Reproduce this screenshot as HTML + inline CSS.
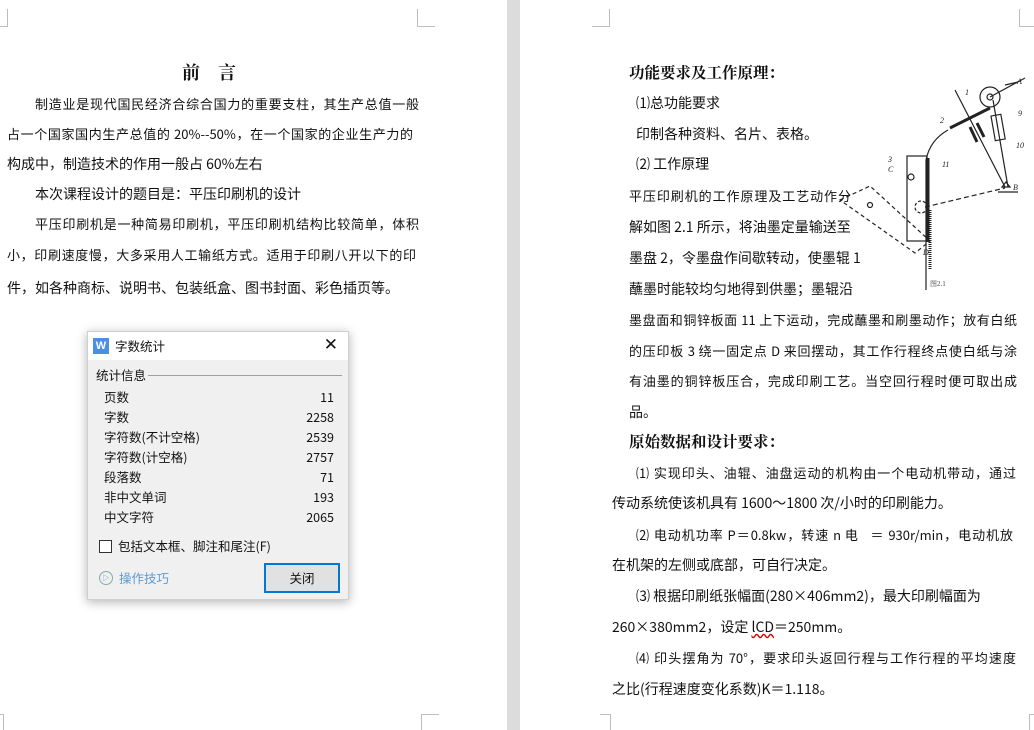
<!DOCTYPE html>
<html><head><meta charset="utf-8">
<style>
*{margin:0;padding:0;box-sizing:border-box}
body{width:1034px;height:730px;overflow:hidden;background:#fff;position:relative;font-family:"Liberation Serif","Noto Serif CJK SC","Noto Sans CJK SC",serif;color:#111}
.gap{position:absolute;left:507px;top:0;width:13px;height:730px;background:#dcdcdc}
.m{position:absolute;background:#bdbdbd}
.l{position:absolute;white-space:nowrap;font-size:14px;line-height:18px;font-family:"Noto Sans CJK SC","WenQuanYi Zen Hei",sans-serif}
.j{text-align:justify;text-align-last:justify;white-space:normal;font-size:13px;height:18px;overflow:visible}
.h{font-family:"Noto Serif CJK SC",serif;font-weight:bold;font-size:15.5px}
.dlg{position:absolute;left:87px;top:331px;width:262px;height:269px;background:#f0f0f0;border:1px solid #cfcfcf;box-shadow:0 2px 10px rgba(0,0,0,.3);font-family:"Noto Sans CJK SC","Liberation Sans",sans-serif;font-size:12.5px;color:#111}
.dlg .tb{height:28px;background:#fff;position:relative}
.row{position:absolute;left:16px;width:230px;height:18px;line-height:18px}
.row span{position:absolute;right:0}
</style></head><body>
<div class="gap"></div>
<div class="m" style="left:7px;top:9px;width:1px;height:18px"></div><div class="m" style="left:0;top:26px;width:8px;height:1px"></div>
<div class="m" style="left:417px;top:9px;width:1px;height:18px"></div><div class="m" style="left:417px;top:26px;width:18px;height:1px"></div>
<div class="m" style="left:609px;top:9px;width:1px;height:18px"></div><div class="m" style="left:592px;top:26px;width:18px;height:1px"></div>
<div class="m" style="left:1019px;top:9px;width:1px;height:18px"></div><div class="m" style="left:1019px;top:26px;width:15px;height:1px"></div>
<div class="m" style="left:3px;top:714px;width:1px;height:16px"></div><div class="m" style="left:0;top:714px;width:4px;height:1px"></div>
<div class="m" style="left:421px;top:714px;width:1px;height:16px"></div><div class="m" style="left:421px;top:714px;width:18px;height:1px"></div>
<div class="m" style="left:610px;top:714px;width:1px;height:16px"></div><div class="m" style="left:600px;top:714px;width:11px;height:1px"></div>
<div class="m" style="left:1029px;top:714px;width:1px;height:16px"></div><div class="m" style="left:1029px;top:714px;width:5px;height:1px"></div>

<div class="l h" style="left:182px;top:61px;font-size:18px;line-height:22px">前&nbsp;&nbsp;&nbsp;&nbsp;言</div>
<div class="l j" style="left:35px;top:95px;width:384px">制造业是现代国民经济合综合国力的重要支柱，其生产总值一般</div>
<div class="l j" style="left:7px;top:125px;width:406px">占一个国家国内生产总值的 20%--50%，在一个国家的企业生产力的</div>
<div class="l" style="left:7px;top:155px">构成中，制造技术的作用一般占 60%左右</div>
<div class="l" style="left:35px;top:185px">本次课程设计的题目是：平压印刷机的设计</div>
<div class="l j" style="left:35px;top:215px;width:384px">平压印刷机是一种简易印刷机，平压印刷机结构比较简单，体积</div>
<div class="l j" style="left:7px;top:246px;width:409px">小，印刷速度慢，大多采用人工输纸方式。适用于印刷八开以下的印</div>
<div class="l" style="left:7px;top:279px">件，如各种商标、说明书、包装纸盒、图书封面、彩色插页等。</div>

<div class="dlg">
<div class="tb">
<div style="position:absolute;left:5px;top:6px;width:16px;height:16px;background:#4a90e2;color:#fff;font:bold 11px/16px 'Liberation Sans',sans-serif;text-align:center">W</div>
<div style="position:absolute;left:27px;top:5px;line-height:18px">字数统计</div>
<div style="position:absolute;right:10px;top:3px;font-size:17px;line-height:20px;font-family:'Liberation Sans',sans-serif">✕</div>
</div>
<div style="position:absolute;left:8px;top:34px;line-height:18px">统计信息</div>
<div style="position:absolute;left:60px;top:43px;width:194px;height:1px;background:#a0a0a0"></div>
<div class="row" style="top:56px">页数<span>11</span></div>
<div class="row" style="top:76px">字数<span>2258</span></div>
<div class="row" style="top:96px">字符数(不计空格)<span>2539</span></div>
<div class="row" style="top:116px">字符数(计空格)<span>2757</span></div>
<div class="row" style="top:136px">段落数<span>71</span></div>
<div class="row" style="top:156px">非中文单词<span>193</span></div>
<div class="row" style="top:176px">中文字符<span>2065</span></div>
<div style="position:absolute;left:11px;top:208px;width:13px;height:13px;border:1px solid #333;background:#fff"></div>
<div style="position:absolute;left:30px;top:205px;line-height:18px">包括文本框、脚注和尾注(F)</div>
<div style="position:absolute;left:11px;top:239px;width:14px;height:14px;border:1px solid #8aa;border-radius:50%;color:#5b9bd5;font-size:7px;line-height:12px;text-align:center">▷</div>
<div style="position:absolute;left:31px;top:237px;line-height:18px;color:#5b9bd5">操作技巧</div>
<div style="position:absolute;left:176px;top:231px;width:76px;height:30px;border:2px solid #0078d7;background:#e1e1e1;text-align:center;line-height:26px">关闭</div>
</div>

<div class="l h" style="left:629px;top:63px">功能要求及工作原理：</div>
<div class="l" style="left:636px;top:94px">⑴总功能要求</div>
<div class="l" style="left:636px;top:125px">印制各种资料、名片、表格。</div>
<div class="l" style="left:636px;top:155px">⑵ 工作原理</div>
<div class="l j" style="left:629px;top:187px;width:222px">平压印刷机的工作原理及工艺动作分</div>
<div class="l" style="left:629px;top:218px">解如图 2.1 所示，将油墨定量输送至</div>
<div class="l" style="left:629px;top:249px">墨盘 2，令墨盘作间歇转动，使墨辊 1</div>
<div class="l" style="left:629px;top:280px">蘸墨时能较均匀地得到供墨；墨辊沿</div>
<div class="l j" style="left:629px;top:311px;width:388px">墨盘面和铜锌板面 11 上下运动，完成蘸墨和刷墨动作；放有白纸</div>
<div class="l j" style="left:629px;top:342px;width:388px">的压印板 3 绕一固定点 D 来回摆动，其工作行程终点使白纸与涂</div>
<div class="l j" style="left:629px;top:372px;width:388px">有油墨的铜锌板压合，完成印刷工艺。当空回行程时便可取出成</div>
<div class="l" style="left:629px;top:403px">品。</div>
<div class="l h" style="left:629px;top:432px">原始数据和设计要求：</div>
<div class="l j" style="left:636px;top:464px;width:380px">⑴ 实现印头、油辊、油盘运动的机构由一个电动机带动，通过</div>
<div class="l" style="left:612px;top:494px">传动系统使该机具有 1600～1800 次/小时的印刷能力。</div>
<div class="l j" style="left:636px;top:526px;width:377px">⑵ 电动机功率 P＝0.8kw，转速 n 电 &nbsp; ＝ 930r/min，电动机放</div>
<div class="l" style="left:612px;top:556px">在机架的左侧或底部，可自行决定。</div>
<div class="l" style="left:636px;top:587px">⑶ 根据印刷纸张幅面(280×406mm2)，最大印刷幅面为</div>
<div class="l" style="left:612px;top:618px">260×380mm2，设定 <span style="text-decoration:underline wavy #d00">lCD</span>＝250mm。</div>
<div class="l j" style="left:636px;top:649px;width:380px">⑷ 印头摆角为 70°，要求印头返回行程与工作行程的平均速度</div>
<div class="l" style="left:612px;top:680px">之比(行程速度变化系数)K＝1.118。</div>

<svg style="position:absolute;left:830px;top:70px" width="200" height="220" viewBox="0 0 200 220" fill="none" stroke="#222" stroke-width="1.2">
<circle cx="160" cy="27" r="10"/><circle cx="160" cy="27" r="3"/>
<line x1="160" y1="27" x2="195" y2="8"/><line x1="175" y1="15" x2="188" y2="12"/>
<line x1="125" y1="20" x2="175" y2="117"/>
<line x1="163" y1="30" x2="178" y2="117"/>
<rect x="163" y="45" width="10" height="25" transform="rotate(-10 168 57)"/>
<line x1="120" y1="58" x2="160" y2="38" stroke-width="3"/>
<line x1="140" y1="57" x2="147" y2="72" stroke-width="3"/>
<line x1="147" y1="53" x2="154" y2="67" stroke-width="3"/>
<path d="M118 60 Q100 70 96 90 L96 220"/>
<rect x="77" y="86" width="20" height="85"/>
<line x1="98" y1="88" x2="98" y2="172" stroke-width="3"/>
<circle cx="81" cy="107" r="3"/>
<path d="M10 130 L40 116 L100 171 L85 183 Z" stroke-dasharray="4 3"/>
<circle cx="40" cy="135" r="2.5"/>
<circle cx="91" cy="137" r="6" stroke-dasharray="3 2"/>
<line x1="95" y1="137" x2="175" y2="118" stroke-dasharray="5 3"/>
<path d="M172 117 l4 -5 l4 5 z"/><line x1="168" y1="122" x2="188" y2="122"/>
<line x1="100" y1="140" x2="100" y2="200" stroke-width="3" stroke-dasharray="1 1"/>
<text x="135" y="25" font-size="8" fill="#222" stroke="none" font-style="italic">1</text>
<text x="187" y="14" font-size="8" fill="#222" stroke="none" font-style="italic">A</text>
<text x="110" y="53" font-size="8" fill="#222" stroke="none" font-style="italic">2</text>
<text x="188" y="46" font-size="8" fill="#222" stroke="none" font-style="italic">9</text>
<text x="186" y="78" font-size="8" fill="#222" stroke="none" font-style="italic">10</text>
<text x="58" y="92" font-size="8" fill="#222" stroke="none" font-style="italic">3</text>
<text x="58" y="102" font-size="8" fill="#222" stroke="none" font-style="italic">C</text>
<text x="112" y="97" font-size="8" fill="#222" stroke="none" font-style="italic">11</text>
<text x="183" y="120" font-size="8" fill="#222" stroke="none" font-style="italic">B</text>
<text x="93" y="185" font-size="8" fill="#222" stroke="none" font-style="italic">D</text>
<text x="100" y="216" font-size="7" fill="#444" stroke="none">图2.1</text>
</svg>
</body></html>
